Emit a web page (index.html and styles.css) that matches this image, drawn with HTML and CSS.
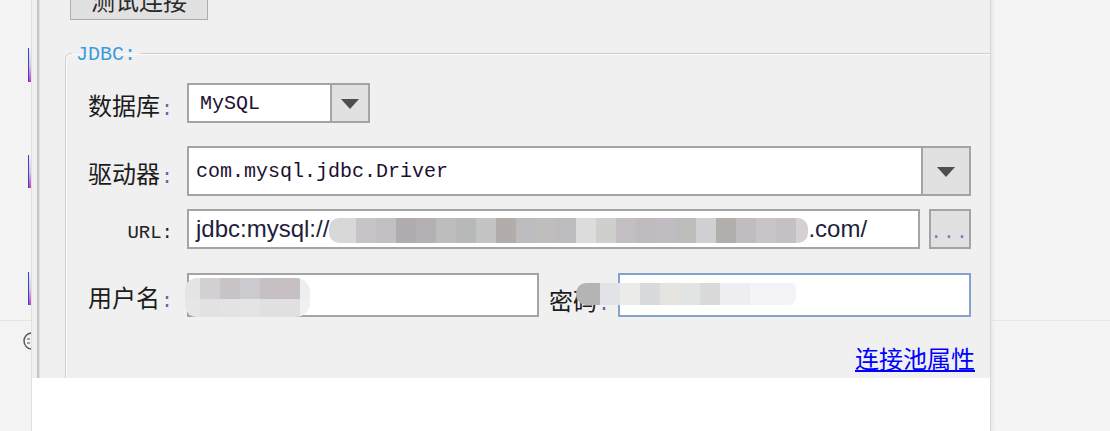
FILE: index.html
```html
<!DOCTYPE html>
<html lang="zh-CN">
<head>
    <meta charset="UTF-8">
    <title>JDBC</title>
    <link rel="stylesheet" href="styles.css">
</head>
<body>
    <div class="side">
        <div class="mark"></div>
        <div class="mark mark-2"></div>
        <div class="mark mark-3"></div>
        <div class="side-line"></div>
        <svg class="face" width="20" height="20" viewBox="0 0 20 20">
            <circle cx="10" cy="10" r="8" fill="none" stroke="#555" stroke-width="1.4"/>
            <path d="M5 8h3M5 12h3" stroke="#555" stroke-width="1.2"/>
        </svg>
    </div>

    <div class="dialog">
        <div class="window">
            <div class="frame">
                <button class="btn-test">测试连接</button>

                <fieldset class="jdbc">
                    <legend>JDBC:</legend>

                    <div class="row row-db">
                        <span class="label">数据库<i>:</i></span>
                        <div class="combo combo-db">
                            <span class="combo-text">MySQL</span>
                            <span class="combo-btn"><b class="arrow"></b></span>
                        </div>
                    </div>

                    <div class="row row-driver">
                        <span class="label">驱动器<i>:</i></span>
                        <div class="combo combo-driver">
                            <span class="combo-text">com.mysql.jdbc.Driver</span>
                            <span class="combo-btn"><b class="arrow"></b></span>
                        </div>
                    </div>

                    <div class="row row-url">
                        <span class="label label-mono">URL:</span>
                        <div class="input input-url">jdbc:mysql://<span class="mosaic-url"></span>.com/</div>
                        <button class="btn-more">...</button>
                    </div>

                    <div class="row row-user">
                        <span class="label">用户名<i>:</i></span>
                        <div class="input input-user"></div>
                        <span class="pw-label">密码<i>:</i></span>
                        <div class="input input-pw"></div>
                        <span class="mosaic mosaic-user"></span>
                        <span class="mosaic mosaic-pw"></span>
                    </div>

                    <div class="row row-link">
                        <a href="#" class="pool-link">连接池属性</a>
                    </div>
                </fieldset>
            </div>
        </div>
        <div class="blank"></div>
    </div>

    <div class="right">
        <div class="right-top"></div>
    </div>
</body>
</html>
```

FILE: styles.css
```css
body {
    margin: 0;
    height: 431px;
    display: flex;
    overflow: hidden;
    background: #f4f4f4;
    font-family: "Noto Sans CJK SC", "Liberation Sans", sans-serif;
    color: #1c1c1c;
}

/* left strip */
.side {
    width: 31px;
    flex: none;
    background: #f3f3f3;
    border-right: 1px solid #e0e0e0;
    padding-top: 48px;
    box-sizing: content-box;
    overflow: hidden;
    display: flex;
    flex-direction: column;
}
.mark {
    width: 3px;
    height: 34px;
    margin-left: 28px;
    border-left: 1px solid #3844c8;
    background: linear-gradient(#eeeefa, #d8c8e8 50%, #c838b8);
}
.mark-2 {
    height: 33px;
    margin-top: 73px;
}
.mark-3 {
    height: 33px;
    margin-top: 84px;
}
.side-line {
    height: 15px;
    border-bottom: 1px solid #e4e4e4;
}
.face {
    margin: 10px 0 0 22px;
    flex: none;
}

/* dialog */
.dialog {
    width: 958px;
    flex: none;
    display: flex;
    flex-direction: column;
}
.window {
    height: 378px;
    background: #f0f0f0;
    overflow: hidden;
    padding-left: 5px;
    display: flex;
}
.frame {
    flex: 1;
    border-left: 2px solid #c6c6c6;
    box-shadow: inset 1px 0 0 #e2e2e2;
}
.blank {
    flex: 1;
    background: #fff;
}

.btn-test {
    display: block;
    width: 138px;
    height: 40px;
    margin: -20px 0 0 31px;
    background: #e1e1e1;
    border: 1px solid #adadad;
    font-family: "Noto Sans CJK SC", sans-serif;
    font-size: 24px;
    line-height: 36px;
    color: #2a2a2a;
    padding: 0;
}

.jdbc {
    width: 960px;
    height: 420px;
    margin: 20px 0 0 26px;
    padding: 16px 0 0 0;
    border: 1px solid #cfcfcf;
    border-radius: 6px 0 0 0;
    box-shadow: inset 1px 1px 0 #fbfbfb;
    box-sizing: border-box;
}
.jdbc legend {
    margin-left: 6px;
    padding: 3px 4px 0;
    font-family: "Liberation Mono", monospace;
    font-size: 20px;
    line-height: 24px;
    color: #3b9ddd;
}

.row {
    width: 905px;
    display: flex;
    align-items: center;
    position: relative;
}
.label {
    width: 107px;
    margin-right: 14px;
    text-align: right;
    font-size: 24px;
    line-height: 30px;
    padding-top: 9px;
    flex: none;
}
.label i, .pw-label i {
    font-style: normal;
    font-family: "Liberation Mono", monospace;
    font-size: 20px;
    color: #7a5aa0;
    margin-left: 1px;
}
.label-mono {
    font-family: "Liberation Mono", monospace;
    font-size: 19px;
    color: #222;
    padding-top: 7px;
}

.row-db { height: 40px; }
.row-driver { height: 50px; margin-top: 23px; }
.row-url { height: 40px; margin-top: 13px; }
.row-user { height: 44px; margin-top: 24px; }
.row-link { margin-top: 26px; justify-content: flex-end; }

/* combo boxes */
.combo {
    height: 100%;
    display: flex;
    border: 2px solid #a4a4a4;
    background: #fff;
    box-sizing: border-box;
}
.combo-db { width: 183px; }
.combo-driver { flex: 1; }
.combo-text {
    flex: 1;
    display: flex;
    align-items: center;
    font-family: "Liberation Mono", monospace;
    font-size: 20px;
    color: #1e1030;
}
.combo-db .combo-text { padding-left: 11px; }
.combo-driver .combo-text { padding-left: 7px; }
.combo-btn {
    width: 36px;
    background: #e1e1e1;
    border-left: 2px solid #a4a4a4;
    display: flex;
    align-items: center;
    justify-content: center;
}
.combo-driver .combo-btn { width: 46px; }
.arrow {
    width: 0;
    height: 0;
    border-left: 9px solid transparent;
    border-right: 9px solid transparent;
    border-top: 10px solid #4e4e4e;
    margin-top: 2px;
}

/* inputs */
.input {
    height: 100%;
    border: 2px solid #a4a4a4;
    background: #fff;
    box-sizing: border-box;
    display: flex;
    align-items: center;
}
.input-url {
    width: 733px;
    padding-left: 7px;
    font-family: "Liberation Sans", sans-serif;
    font-size: 24px;
    color: #1e1e3a;
}
.mosaic-url {
    width: 479px;
    height: 25px;
    margin-top: 2px;
    border-radius: 10px;
    background: linear-gradient(to right,
        #d8d8d8 0 27px, #c6c4c6 27px 47px, #c2c0c2 47px 67px, #b0acb0 67px 87px,
        #b4b0b4 87px 107px, #bdbdbd 107px 127px, #b7b8b8 127px 147px, #c4c4c4 147px 167px,
        #b2adab 167px 187px, #bcbcbe 187px 207px, #c0bebc 207px 227px, #bcbcbe 227px 247px,
        #dcdcdc 247px 267px, #cfcfcb 267px 287px, #c2bec2 287px 307px, #bebabe 307px 327px,
        #c0bcc2 327px 347px, #bcbcba 347px 367px, #d0d0d2 367px 387px, #b1aeac 387px 407px,
        #c0bcc0 407px 427px, #c8c4c8 427px 447px, #c4c0c4 447px 467px, #d4d0d4 467px);
}
.btn-more {
    width: 42px;
    height: 100%;
    margin-left: 9px;
    padding: 0 0 4px;
    background: #e1e1e1;
    border: 2px solid #a4a4a4;
    font-family: "Liberation Mono", monospace;
    font-size: 18px;
    color: #8a6ab0;
    display: flex;
    align-items: flex-end;
    justify-content: center;
    letter-spacing: 2px;
}
.input-user { width: 352px; }
.pw-label {
    width: 69px;
    margin-left: 10px;
    font-size: 24px;
    padding-top: 9px;
    flex: none;
}
.input-pw {
    flex: 1;
    border-color: #85a2cc;
}

/* blurred values */
.mosaic {
    position: absolute;
}
.mosaic-user {
    left: 119px;
    top: 5px;
    width: 125px;
    height: 39px;
    border-radius: 12px 14px 14px 12px;
    background:
        linear-gradient(to right, #e4e4e4 0 15px, #d2d0d2 15px 35px, #c8c3c6 35px 55px,
            #cbcbcf 55px 75px, #c6c0c4 75px 115px, #eceef0 115px) top / 100% 21px no-repeat,
        linear-gradient(to right, #e6e6e6 0 15px, #e2e2e2 15px 35px, #e3e3e3 35px 55px,
            #e4e4e4 55px 75px, #e0e0e0 75px 115px, #f0f0f0 115px) bottom / 100% 18px no-repeat;
}
.mosaic-pw {
    left: 510px;
    top: 10px;
    width: 220px;
    height: 22px;
    border-radius: 10px 4px 8px 10px;
    background: linear-gradient(to right, #b4b4b4 0 24px, #e2e3e8 24px 44px, #ebebea 44px 64px,
        #d9dadc 64px 84px, #e6e4e0 84px 104px, #e2e4e4 104px 124px, #dadada 124px 144px,
        #eeeef2 144px 174px, #f4f4f8 174px);
}

.pool-link {
    margin-right: -4px;
    font-size: 24px;
    line-height: 30px;
    color: #0000ff;
    text-decoration: underline;
}

/* right area */
.right {
    flex: 1;
    background: #f4f4f4;
    border-left: 1px solid #d6d6d6;
    box-shadow: inset 4px 0 4px -3px rgba(0, 0, 0, 0.08);
}
.right-top {
    height: 320px;
    border-bottom: 1px solid #e6e6e6;
}
```
